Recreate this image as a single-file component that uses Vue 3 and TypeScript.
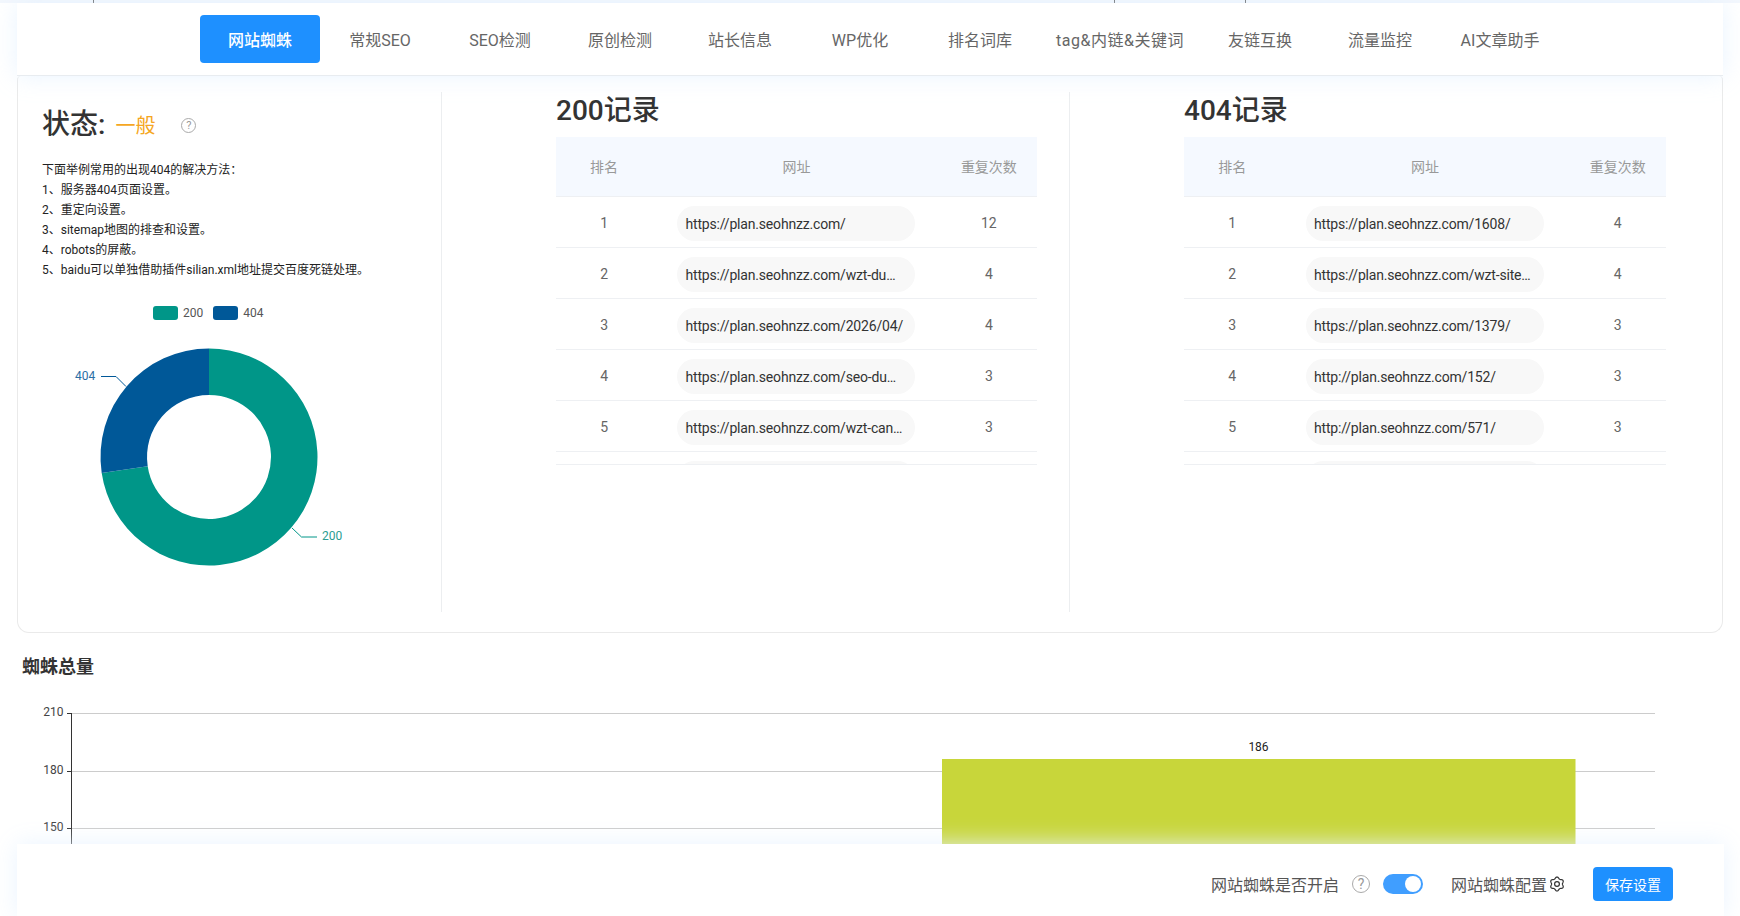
<script setup lang="ts">
const tabs = ['网站蜘蛛', '常规SEO', 'SEO检测', '原创检测', '站长信息', 'WP优化', '排名词库', 'tag&内链&关键词', '友链互换', '流量监控', 'AI文章助手']
const tips = ['下面举例常用的出现404的解决方法：', '1、服务器404页面设置。', '2、重定向设置。', '3、sitemap地图的排查和设置。', '4、robots的屏蔽。', '5、baidu可以单独借助插件silian.xml地址提交百度死链处理。']

interface Row { url: string; n: number }
const tables: { title: string; rows: Row[] }[] = [
  {
    title: '200记录',
    rows: [
      { url: 'https://plan.seohnzz.com/', n: 12 },
      { url: 'https://plan.seohnzz.com/wzt-du…', n: 4 },
      { url: 'https://plan.seohnzz.com/2026/04/', n: 4 },
      { url: 'https://plan.seohnzz.com/seo-du…', n: 3 },
      { url: 'https://plan.seohnzz.com/wzt-can…', n: 3 },
      { url: 'https://plan.seohnzz.com/tag/', n: 3 },
    ],
  },
  {
    title: '404记录',
    rows: [
      { url: 'https://plan.seohnzz.com/1608/', n: 4 },
      { url: 'https://plan.seohnzz.com/wzt-site…', n: 4 },
      { url: 'https://plan.seohnzz.com/1379/', n: 3 },
      { url: 'http://plan.seohnzz.com/152/', n: 3 },
      { url: 'http://plan.seohnzz.com/571/', n: 3 },
      { url: 'http://plan.seohnzz.com/88/', n: 3 },
    ],
  },
]

const cx = 209
const cy = 457
const R = 108.5
const r = 62
function pt(rad: number, deg: number): string {
  const a = (deg * Math.PI) / 180
  return `${(cx + rad * Math.sin(a)).toFixed(2)} ${(cy - rad * Math.cos(a)).toFixed(2)}`
}
function arc(from: number, to: number): string {
  const large = to - from > 180 ? 1 : 0
  return `M${pt(R, from)}A${R} ${R} 0 ${large} 1 ${pt(R, to)}L${pt(r, to)}A${r} ${r} 0 ${large} 0 ${pt(r, from)}Z`
}
const arc200 = arc(0, 261.5)
const arc404 = arc(261.5, 360)

const gridLines = [
  { y: 713, label: '210' },
  { y: 771, label: '180' },
  { y: 828, label: '150' },
]

function gearPath(): string {
  const parts: string[] = []
  for (let i = 0; i < 72; i++) {
    const t = (i / 72) * Math.PI * 2
    const rad = 6.2 + 0.8 * Math.cos(6 * t)
    parts.push(`${(8 + rad * Math.sin(t)).toFixed(2)} ${(8 - rad * Math.cos(t)).toFixed(2)}`)
  }
  return 'M' + parts.join('L') + 'Z'
}
const gear = gearPath()
</script>

<template>
  <div class="page">
    <div class="strip">
      <i class="tick tick-a"></i>
      <i class="tick tick-b"></i>
      <i class="tick tick-c"></i>
    </div>

    <nav class="tabbar">
      <div v-for="(t, i) in tabs" :key="t" class="tab" :class="{ active: i === 0, wide: t.length > 8 }">{{ t }}</div>
    </nav>

    <section class="card">
      <div class="col col-status">
        <div class="status">
          <span class="status-label">状态:</span>
          <span class="status-value">一般</span>
          <span class="help help-sm">?</span>
        </div>
        <div class="tips">
          <div v-for="t in tips" :key="t">{{ t }}</div>
        </div>
        <div class="legend">
          <i class="swatch teal"></i><span>200</span>
          <i class="swatch blue"></i><span>404</span>
        </div>
        <svg class="donut" width="380" height="260" viewBox="43 330 380 260">
          <path :d="arc200" fill="#009688" />
          <path :d="arc404" fill="#005898" />
          <polyline points="101,376.5 116,376.5 126,386.5" fill="none" stroke="#005898" />
          <polyline points="292,528 301.5,537 317,537" fill="none" stroke="#009688" />
          <text x="75" y="379.5" class="pie-label" fill="#2a6ea5">404</text>
          <text x="322" y="539.5" class="pie-label" fill="#2a9d92">200</text>
        </svg>
      </div>

      <div v-for="(tb, ti) in tables" :key="tb.title" class="col col-table" :class="ti === 0 ? 'first' : 'second'">
        <h2 class="table-title">{{ tb.title }}</h2>
        <div class="thead">
          <div>排名</div>
          <div>网址</div>
          <div>重复次数</div>
        </div>
        <div class="tbody">
          <div v-for="(row, ri) in tb.rows" :key="ri" class="trow">
            <div>{{ ri + 1 }}</div>
            <div class="url-cell"><span class="pill">{{ row.url }}</span></div>
            <div>{{ row.n }}</div>
          </div>
        </div>
      </div>
    </section>

    <section class="total">
      <h3 class="total-title">蜘蛛总量</h3>
      <svg class="chart" width="1740" height="226" viewBox="0 690 1740 226">
        <g v-for="g in gridLines" :key="g.label">
          <line x1="71" x2="1655" :y1="g.y + 0.5" :y2="g.y + 0.5" stroke="#ccc" />
          <line x1="67" x2="71" :y1="g.y + 0.5" :y2="g.y + 0.5" stroke="#333" />
          <text x="63.5" :y="g.y + 3" text-anchor="end" class="axis-label">{{ g.label }}</text>
        </g>
        <line x1="71.5" x2="71.5" y1="713" y2="916" stroke="#333" />
        <rect x="942" y="759" width="633.5" height="157" fill="#c8d63a" />
        <text x="1258.5" y="751" text-anchor="middle" class="bar-label">186</text>
      </svg>
    </section>

    <footer class="footer">
      <span class="foot-text">网站蜘蛛是否开启</span>
      <span class="help help-lg">?</span>
      <span class="switch"><i class="knob"></i></span>
      <span class="foot-text config">网站蜘蛛配置</span>
      <svg class="gear" width="16" height="16" viewBox="0 0 16 16">
        <path :d="gear" fill="none" stroke="#333" stroke-width="1.2" />
        <circle cx="8" cy="8" r="2.4" fill="none" stroke="#333" stroke-width="1.2" />
      </svg>
      <button class="save" type="button">保存设置</button>
    </footer>
  </div>
</template>

<style scoped>
.page {
  position: relative;
  width: 1740px;
  height: 916px;
  overflow: hidden;
  background: #fff;
  font-family: Roboto, "Noto Sans CJK SC", sans-serif;
  color: #333;
}
.strip {
  display: flex;
  height: 3px;
  background: #f3f7fd;
}
.tick {
  width: 1px;
  height: 3px;
  background: #555;
}
.tick-a { margin-left: 93px; }
.tick-b { margin-left: 1020px; }
.tick-c { margin-left: 130px; }
.tabbar {
  position: relative;
  z-index: 2;
  display: flex;
  align-items: flex-start;
  height: 73px;
  margin: 0 17px;
  padding: 12px 0 0 183px;
  box-sizing: border-box;
  background: #fff;
  border-bottom: 1px solid #e8ecf0;
  box-shadow: 0 0 22px rgba(226, 240, 255, 0.75);
}
.tab {
  min-width: 120px;
  height: 48px;
  padding: 0 16px;
  box-sizing: border-box;
  border-radius: 4px;
  font-size: 16px;
  line-height: 51px;
  text-align: center;
  color: #666;
  white-space: nowrap;
}
.tab.wide {
  width: 160px;
  letter-spacing: 0.5px;
}
.tab.active {
  background: #1e90ff;
  color: #fff;
  font-weight: 500;
}
.card {
  display: flex;
  align-items: flex-start;
  height: 557px;
  margin: 0 17px;
  padding-top: 16px;
  box-sizing: border-box;
  border: 1px solid #eaeaea;
  border-top: 0;
  border-radius: 4px 4px 12px 12px;
}
.col {
  height: 520px;
  box-sizing: border-box;
  overflow: hidden;
}
.col-status {
  width: 424px;
  padding: 10px 0 0 24px;
  border-right: 1px solid #eceef0;
}
.status {
  display: flex;
  align-items: center;
  height: 40px;
}
.status-label {
  font-size: 28px;
  font-weight: 500;
  color: #333;
}
.status-value {
  margin: 4px 0 0 10px;
  font-size: 20px;
  color: #f5a623;
}
.help {
  display: inline-flex;
  align-items: center;
  justify-content: center;
  box-sizing: border-box;
  border: 1px solid #aaa;
  border-radius: 50%;
  color: #999;
}
.help-sm {
  width: 15px;
  height: 15px;
  margin: 6px 0 0 26px;
  font-size: 11px;
}
.tips {
  margin-top: 18px;
  font-size: 12px;
  line-height: 20px;
  color: #222;
}
.legend {
  display: flex;
  align-items: center;
  height: 16px;
  margin: 25px 0 0 111px;
  font-size: 12px;
  color: #555;
}
.legend span { margin: 0 10px 0 5px; }
.swatch {
  width: 25px;
  height: 14px;
  border-radius: 3px;
}
.teal { background: #009688; }
.blue { background: #005898; }
.donut {
  display: block;
  margin: 9px 0 0 1px;
}
.pie-label {
  font-size: 12px;
}
.col-table.first {
  width: 628px;
  padding: 0 32px 0 114px;
  border-right: 1px solid #eceef0;
}
.col-table.second {
  flex: 1;
  padding: 0 56px 0 114px;
}
.table-title {
  height: 37px;
  margin: 0 0 8px;
  font-size: 28px;
  font-weight: 500;
  line-height: 37px;
  color: #333;
}
.thead,
.trow {
  display: grid;
  grid-template-columns: 20% 60% 20%;
  text-align: center;
  font-size: 14px;
}
.thead {
  height: 60px;
  line-height: 60px;
  background: #f5f9ff;
  color: #999;
  border-bottom: 1px solid #eef0f3;
  box-sizing: border-box;
}
.tbody {
  height: 268px;
  overflow: hidden;
  border-bottom: 1px solid #eef0f3;
  box-sizing: border-box;
}
.trow {
  height: 51px;
  line-height: 52px;
  color: #666;
  border-bottom: 1px solid #eef0f3;
  box-sizing: border-box;
}
.url-cell {
  display: flex;
  justify-content: center;
  align-items: center;
}
.pill {
  width: 238px;
  height: 35px;
  padding: 0 8px;
  box-sizing: border-box;
  border-radius: 18px;
  background: #f8f8f8;
  color: #333;
  letter-spacing: -0.18px;
  line-height: 36px;
  text-align: left;
  white-space: nowrap;
  overflow: hidden;
}
.total-title {
  height: 57px;
  margin: 0;
  padding: 22px 0 0 22px;
  box-sizing: border-box;
  font-size: 18px;
  font-weight: 700;
  line-height: 24px;
  color: #333;
}
.chart { display: block; }
.axis-label {
  font-size: 12px;
  fill: #444;
}
.bar-label {
  font-size: 12px;
  fill: #222;
}
.footer {
  position: absolute;
  z-index: 3;
  left: 17px;
  right: 16px;
  bottom: 0;
  height: 72px;
  box-sizing: border-box;
  display: flex;
  align-items: center;
  justify-content: flex-end;
  padding: 8px 51px 0 0;
  background: #fff;
  box-shadow: 0 0 22px rgba(232, 243, 255, 0.9);
}
.foot-text {
  font-size: 16px;
  color: #555;
}
.help-lg {
  width: 18px;
  height: 18px;
  margin: 0 0 0 13px;
  font-size: 14px;
}
.switch {
  display: flex;
  justify-content: flex-end;
  align-items: center;
  width: 40px;
  height: 20px;
  margin-left: 13px;
  padding-right: 2px;
  box-sizing: border-box;
  border-radius: 10px;
  background: #409eff;
}
.knob {
  width: 16px;
  height: 16px;
  border-radius: 50%;
  background: #fff;
}
.config { margin-left: 28px; }
.gear { margin-left: 2px; }
.save {
  width: 80px;
  height: 34px;
  margin-left: 28px;
  padding: 0;
  border: 0;
  border-radius: 4px;
  background: #1e90ff;
  color: #fff;
  font-family: inherit;
  font-size: 14px;
}
</style>
